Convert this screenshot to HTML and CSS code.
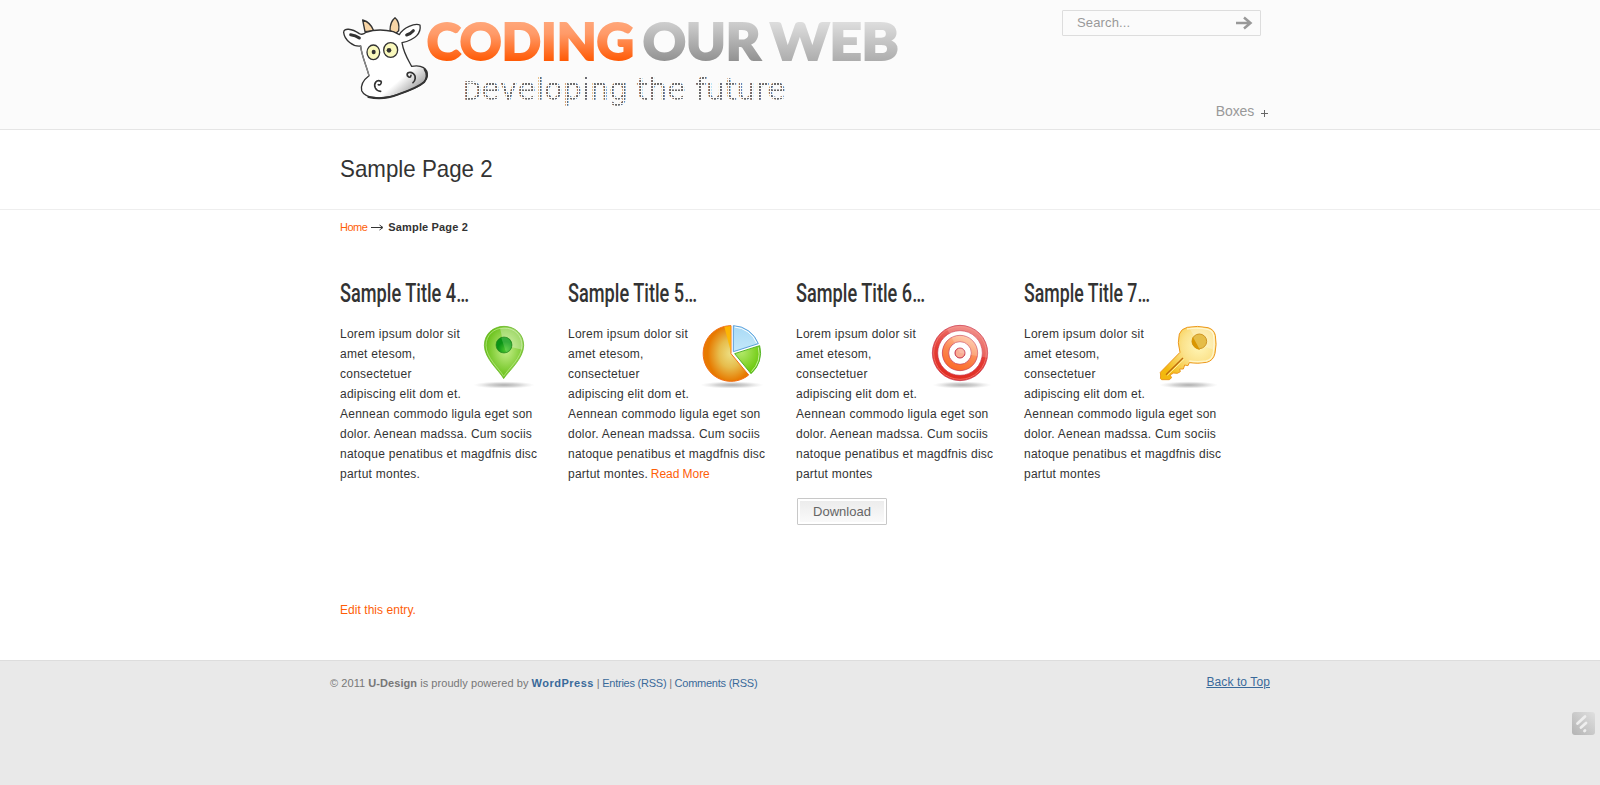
FILE: index.html
```html
<!DOCTYPE html>
<html lang="en">
<head>
<meta charset="utf-8">
<title>Sample Page 2</title>
<link rel="stylesheet" href="styles.css">
</head>
<body>
<header class="header">
  <div class="wrap header-row">
    <svg class="logo" width="600" height="118" viewBox="0 0 1800 354">
      <defs>
        <linearGradient id="orange" gradientUnits="userSpaceOnUse" x1="0" y1="52" x2="0" y2="168"><stop offset="0" stop-color="#ffa679"/><stop offset=".3" stop-color="#ff9a68"/><stop offset="1" stop-color="#ff5a05"/></linearGradient>
        <linearGradient id="gray" gradientUnits="userSpaceOnUse" x1="0" y1="50" x2="0" y2="168"><stop offset="0" stop-color="#cfcfcf"/><stop offset="1" stop-color="#929292"/></linearGradient>
        <linearGradient id="silver" gradientUnits="userSpaceOnUse" x1="0" y1="50" x2="0" y2="168"><stop offset="0" stop-color="#dedede"/><stop offset="1" stop-color="#adadad"/></linearGradient>
        <pattern id="dots" patternUnits="userSpaceOnUse" width="9" height="9"><rect width="6" height="6" fill="#6a6a6a"/></pattern>
        <linearGradient id="face" gradientUnits="userSpaceOnUse" x1="180" y1="180" x2="255" y2="268"><stop offset=".45" stop-color="#fff"/><stop offset="1" stop-color="#999"/></linearGradient>
      </defs>
      <g stroke="#333" stroke-width="4" stroke-linejoin="round" stroke-linecap="round">
        <path d="M105 80 L98 45 Q122 52 131 77 Z M180 77 Q180 50 195 38 Q210 50 206 77 L196 86 Z" fill="#f8d5a5"/>
        <path d="M92 123 C70 126 43 105 41 82 C41 68 65 70 88 86 Q99 91 108 82 Q145 69 190 80 L208 89 C220 67 254 54 270 60 C274 83 258 104 216 113 C221 145 234 164 245 184 C275 178 294 191 292 213 C289 240 240 256 205 268 C160 285 106 282 95 257 C91 236 101 224 117 212 C108 178 94 150 92 123Z" fill="url(#face)"/>
        <path d="M117 212C108 178 94 150 92 123" fill="none" stroke="#888"/>
        <path d="M62 89 Q77 91 88 99 M230 90 Q241 87 250 77" fill="none" stroke-width="9"/>
        <path d="M284 193 Q297 213 282 232 Q260 250 205 268 Q160 286 115 276" fill="none" stroke-width="6"/>
        <ellipse cx="130" cy="142" rx="19" ry="22" fill="#faf9bd"/>
        <ellipse cx="182" cy="135" rx="21" ry="22" fill="#faf9bd"/>
        <path d="M153 229 C140 221 130 236 136 249 Q141 259 152 259 M145 239 Q153 242 154 231 M232 212 C229 202 241 199 250 206 C260 214 255 229 249 233 M232 212 Q241 222 243 211" fill="none" stroke-width="5"/>
      </g>
      <ellipse cx="131" cy="141" rx="6" ry="7" fill="#333"/><ellipse cx="177" cy="136" rx="7" ry="7" fill="#333"/>
      <g class="brand">
        <text x="290" y="166" textLength="622" lengthAdjust="spacingAndGlyphs" fill="url(#orange)" stroke="url(#orange)">CODING</text>
        <text x="938" y="165" textLength="353" lengthAdjust="spacingAndGlyphs" fill="url(#gray)" stroke="url(#gray)">OUR</text>
        <text x="1321" y="164" textLength="385" lengthAdjust="spacingAndGlyphs" fill="url(#silver)" stroke="url(#silver)">WEB</text>
      </g>
      <text class="tagline" x="399" y="281" textLength="968" lengthAdjust="spacingAndGlyphs" fill="url(#dots)" stroke="url(#dots)"><tspan class="initial">D</tspan>eveloping the future</text>
    </svg>
    <div class="header-side">
      <form class="search">
        <span>Search...</span>
        <svg width="17" height="14" viewBox="0 0 17 14"><path d="M0 7H14M8 1.500L14.500 7L8 12.500" fill="none" stroke="#999" stroke-width="2.500"/></svg>
      </form>
      <nav class="menu"><a>Boxes</a><svg width="7" height="7" viewBox="0 0 7 7"><path d="M0 3.500H7M3.500 0V7" stroke="#666"/></svg></nav>
    </div>
  </div>
</header>
<section class="page-title"><h1 class="wrap"><span>Sample Page 2</span></h1></section>
<main class="wrap main">
  <div class="crumbs"><a class="link">Home</a><svg width="13" height="7" viewBox="0 0 13 7"><path d="M0 3.500H11M8.500 1L12 3.500L8.500 6" fill="none" stroke="#333"/></svg><b>Sample Page 2</b></div>
  <div class="columns">
    <article class="col">
      <h3><svg width="200" height="30"><text x="0" y="24" textLength="129" lengthAdjust="spacingAndGlyphs">Sample Title 4…</text></svg></h3>
      <svg class="icon" width="64" height="64" viewBox="429 159 192 192">
        <defs>
          <radialGradient id="shadow"><stop offset="0" stop-color="#999" stop-opacity=".8"/><stop offset=".5" stop-color="#aaa" stop-opacity=".5"/><stop offset="1" stop-color="#ccc" stop-opacity="0"/></radialGradient>
          <radialGradient id="pin" cx=".55" cy=".45"><stop offset="0" stop-color="#c8f08d"/><stop offset="1" stop-color="#6bc21c"/></radialGradient>
          <radialGradient id="hole" cx=".6" cy=".8"><stop offset="0" stop-color="#4cc52e"/><stop offset="1" stop-color="#0a9416"/></radialGradient>
        </defs>
        <ellipse cx="522" cy="342" rx="92" ry="11" fill="url(#shadow)"/>
        <path d="M521 323C508 299 463 263 463 223C463 189 489 166 522 166S581 189 581 223C581 263 537 299 521 323Z" fill="url(#pin)" stroke="#61b11c" stroke-width="2"/>
        <path d="M521 316C506 291 468 260 468 223C468 193 491 171 522 171S576 193 576 223C576 260 537 291 521 316Z" fill="none" stroke="#c5ed98" stroke-width="2"/>
        <path d="M510 172L522 223L577 236C587 184 546 161 510 172Z" fill="#fff" opacity=".3"/>
        <circle cx="522" cy="222" r="24" fill="url(#hole)" stroke="#26831d" stroke-width="2"/><path d="M514 201L528 244A23 23 0 0 0 522 199Z" fill="#9be78e" opacity=".3"/>
      </svg>
      <p>Lorem ipsum dolor sit amet etesom, consectetuer adipiscing elit dom et. Aennean commodo ligula eget son dolor. Aenean madssa. Cum sociis natoque penatibus et magdfnis disc partut montes.</p>
    </article>
    <article class="col">
      <h3><svg width="200" height="30"><text x="0" y="24" textLength="129" lengthAdjust="spacingAndGlyphs">Sample Title 5…</text></svg></h3>
      <svg class="icon" width="64" height="64" viewBox="423 159 192 192">
        <defs>
          <radialGradient id="pie" cx=".6" cy=".5"><stop offset="0" stop-color="#eddf82"/><stop offset=".5" stop-color="#e7bd4d"/><stop offset="1" stop-color="#e77a00"/></radialGradient>
          <linearGradient id="pieBlue" x1="0" y1="0" x2="0" y2="1"><stop offset="0" stop-color="#a8daf5"/><stop offset="1" stop-color="#c4e8fa"/></linearGradient>
          <radialGradient id="pieGreen" cx=".25" cy=".2" r=".9"><stop offset="0" stop-color="#b5e96d"/><stop offset="1" stop-color="#62c500"/></radialGradient>
        </defs>
        <ellipse cx="516" cy="342" rx="95" ry="11" fill="url(#shadow)"/>
        <path d="M513 164A83.500 83.500 0 1 0 566 312L513 248Z" fill="url(#pie)" stroke="#f26d12" stroke-width="3"/>
        <path d="M493 167L512 240V165Z" fill="#ffb900" opacity=".9"/>
        <path d="M520 164A83 83 0 0 1 595 218L520 242Z" fill="url(#pieBlue)" stroke="#5ca1dc" stroke-width="3"/><path d="M524 168A79 79 0 0 1 590 216" fill="none" stroke="#fff" stroke-width="3"/>
        <path d="M599 224A83 83 0 0 1 573 308L524 248Z" fill="url(#pieGreen)" stroke="#55b629" stroke-width="3"/><path d="M595 229A78 78 0 0 1 574 302" fill="none" stroke="#c9efa0" stroke-width="3"/>
      </svg>
      <p>Lorem ipsum dolor sit amet etesom, consectetuer adipiscing elit dom et. Aennean commodo ligula eget son dolor. Aenean madssa. Cum sociis natoque penatibus et magdfnis disc partut montes. <a class="link more">Read More</a></p>
    </article>
    <article class="col">
      <h3><svg width="200" height="30"><text x="0" y="24" textLength="129" lengthAdjust="spacingAndGlyphs">Sample Title 6…</text></svg></h3>
      <svg class="icon" width="64" height="64" viewBox="417 159 192 192">
        <defs><linearGradient id="ring" x1=".6" y1="0" x2=".4" y2="1"><stop offset="0" stop-color="#ee7770"/><stop offset=".5" stop-color="#e43c35"/><stop offset="1" stop-color="#e02b20"/></linearGradient>
        <linearGradient id="innerRing" x1=".7" y1="0" x2=".3" y2="1"><stop offset="0" stop-color="#ffc5a1"/><stop offset=".5" stop-color="#fb8852"/><stop offset="1" stop-color="#fb6825"/></linearGradient></defs>
        <ellipse cx="516" cy="342" rx="88" ry="11" fill="url(#shadow)"/>
        <g stroke="#c52d45" stroke-width="2"><circle cx="510" cy="246" r="83" fill="url(#ring)"/><circle cx="510" cy="246" r="67" fill="#fff"/><circle cx="510" cy="246" r="53" fill="url(#innerRing)"/><circle cx="510" cy="246" r="34" fill="#fff"/><circle cx="510" cy="246" r="15" fill="#f9ac93" stroke-width="3"/></g>
        <circle cx="510" cy="246" r="79" fill="none" stroke="#f48478" stroke-width="2"/>
        <path d="M471 174L510 246L592 260A83 83 0 0 0 471 174Z" fill="#fff" opacity=".18"/>
      </svg>
      <p>Lorem ipsum dolor sit amet etesom, consectetuer adipiscing elit dom et. Aennean commodo ligula eget son dolor. Aenean madssa. Cum sociis natoque penatibus et magdfnis disc partut montes</p>
      <a class="button">Download</a>
    </article>
    <article class="col">
      <h3><svg width="200" height="30"><text x="0" y="24" textLength="126" lengthAdjust="spacingAndGlyphs">Sample Title 7…</text></svg></h3>
      <svg class="icon" width="64" height="64" viewBox="426 159 192 192">
        <defs><radialGradient id="key" gradientUnits="userSpaceOnUse" cx="552" cy="225" r="120"><stop offset="0" stop-color="#fff6b8"/><stop offset=".42" stop-color="#fbe28b"/><stop offset="1" stop-color="#f3b80e"/></radialGradient></defs>
        <ellipse cx="521" cy="342" rx="88" ry="11" fill="url(#shadow)"/>
        <path d="M517 169Q547 163 579 170Q597 175 601 193Q606 220 600 247Q595 269 575 274Q548 279 523 275L519 284L509 282L505 294L494 294L496 302L487 307L476 306L465 312L470 320L463 326H440Q434 324 437 315L436 304L495 244Q486 214 493 189Q499 173 517 169Z" fill="url(#key)" stroke="#ed981e" stroke-width="3"/>
        <path d="M516 174Q547 168 579 175Q592 179 596 193Q600 220 594 250Q590 266 573 270Q546 274 523 270" fill="none" stroke="#fff5c9" stroke-width="4"/>
        <path d="M524 173L552 220L597 237Q603 190 593 180Q570 166 524 173Z" fill="#fff" opacity=".25"/>
        <circle cx="553" cy="211" r="22" fill="#e5bd48" stroke="#cf9522" stroke-width="3"/><path d="M534 204L550 233A23 23 0 0 1 534 204Z" fill="#d99600" stroke="#d99600" stroke-width="5"/>
        <path d="M453 311L504 261" stroke="#bd6b0d" stroke-width="4"/><path d="M457 313L508 264" stroke="#fff29e" stroke-width="3"/>
      </svg>
      <p>Lorem ipsum dolor sit amet etesom, consectetuer adipiscing elit dom et. Aennean commodo ligula eget son dolor. Aenean madssa. Cum sociis natoque penatibus et magdfnis disc partut montes</p>
    </article>
  </div>
  <a class="link edit">Edit this entry.</a>
</main>
<footer class="footer">
  <div class="footer-row">
    <div class="credits">© 2011 <b>U-Design</b> is proudly powered by <a class="wordpress"><b>WordPress</b></a><span class="feeds"> | <a>Entries (RSS)</a> | <a>Comments (RSS)</a></span></div>
    <a class="top">Back to Top</a>
  </div>
  <svg class="badge" width="23" height="23" viewBox="0 0 23 23">
    <defs><linearGradient id="badge" x1="1" y1="0" x2="0" y2="1"><stop offset="0" stop-color="#e0e0e0"/><stop offset="1" stop-color="#b3b3b3"/></linearGradient></defs>
    <rect width="23" height="23" rx="3" fill="url(#badge)"/><path d="M5.500 11.500L13 4.500M9 15.500L14 11M12.500 19L13 18.500" stroke="#eee" stroke-width="2.800" stroke-linecap="round"/>
  </svg>
</footer>
</body>
</html>
```

FILE: styles.css
```css
body {
  margin: 0;
  height: 785px;
  display: flex;
  flex-direction: column;
  background: #fff;
  color: #333;
  font: 12px/20px "Liberation Sans", Arial, sans-serif;
  overflow: hidden;
}
h1, h3, p { margin: 0; font-weight: normal; }
svg { display: block; flex: none; }
.wrap { width: 920px; margin: 0 auto; box-sizing: border-box; }
.header { height: 129px; background: #fbfbfb; border-bottom: 1px solid #e5e5e5; }
.header-row { display: flex; justify-content: space-between; height: 129px; }
.logo { margin: 5px 0 0 -10px; }
.brand { font: 900 153px Lato, sans-serif; stroke-width: 6px; }
.tagline { font: 200 84px "DejaVu Sans", sans-serif; stroke-width: 4px; }
.initial { font-size: 67px; }
.header-side { display: flex; flex-direction: column; justify-content: space-between; width: 208px; margin-right: -10px; padding: 10px 0 8px; }
.search {
  display: flex; align-items: center; justify-content: space-between;
  box-sizing: border-box; width: 199px; height: 26px; padding: 0 7px 0 14px;
  border: 1px solid #ddd; border-radius: 1px;
  font-size: 13px; color: #999; letter-spacing: .15px;
}
.menu { display: flex; justify-content: flex-end; align-items: center; gap: 7px; padding-right: 2px; font-size: 14px; letter-spacing: -.15px; color: #999; }
.menu svg { margin-top: 5px; }
.page-title { height: 79px; border-bottom: 1px solid #eee; }
.page-title .wrap { font-size: 24px; line-height: 78px; }
.page-title span { display: inline-block; transform: scaleX(.93); transform-origin: left; }
.main { height: 450px; }
.crumbs { display: flex; align-items: center; gap: 4px; padding-top: 7px; font-size: 11px; }
.crumbs .link { letter-spacing: -.5px; }
.crumbs b { letter-spacing: .15px; }
.link { color: #fe5e08; }
.columns { display: flex; gap: 28px; height: 322px; padding-top: 41px; }
.col { width: 200px; letter-spacing: .25px; }
.col h3 { height: 46px; font: 500 25px Roboto, sans-serif; letter-spacing: 0; }
.col h3 text { fill: #333; }
.icon { float: right; margin: -.5px 3px 0 8px; }
.more { letter-spacing: -.05px; margin-left: -1px; }
.button {
  display: block; box-sizing: border-box; width: 90px; height: 27px; margin: 14px 0 0 1px;
  border: 1px solid #c8c8c8; border-radius: 1px; box-shadow: inset 0 0 0 2px #fff;
  background: linear-gradient(#ebebeb, #fbfbfb);
  font-size: 13px; line-height: 25px; letter-spacing: 0; text-align: center; color: #666;
}
.edit { letter-spacing: .05px; }
.footer { flex: 1; position: relative; background: #e9e9e9; border-top: 1px solid #ddd; }
.footer-row { display: flex; justify-content: space-between; width: 940px; margin: 0 auto; padding-top: 11px; }
.credits { padding-top: 1px; font-size: 11px; letter-spacing: .06px; color: #777; }
.wordpress { letter-spacing: .5px; }
.feeds { letter-spacing: -.24px; }
.footer a { color: #39699a; }
.top { text-decoration: underline; letter-spacing: .1px; }
.badge { position: absolute; right: 5px; top: 51px; }
```
